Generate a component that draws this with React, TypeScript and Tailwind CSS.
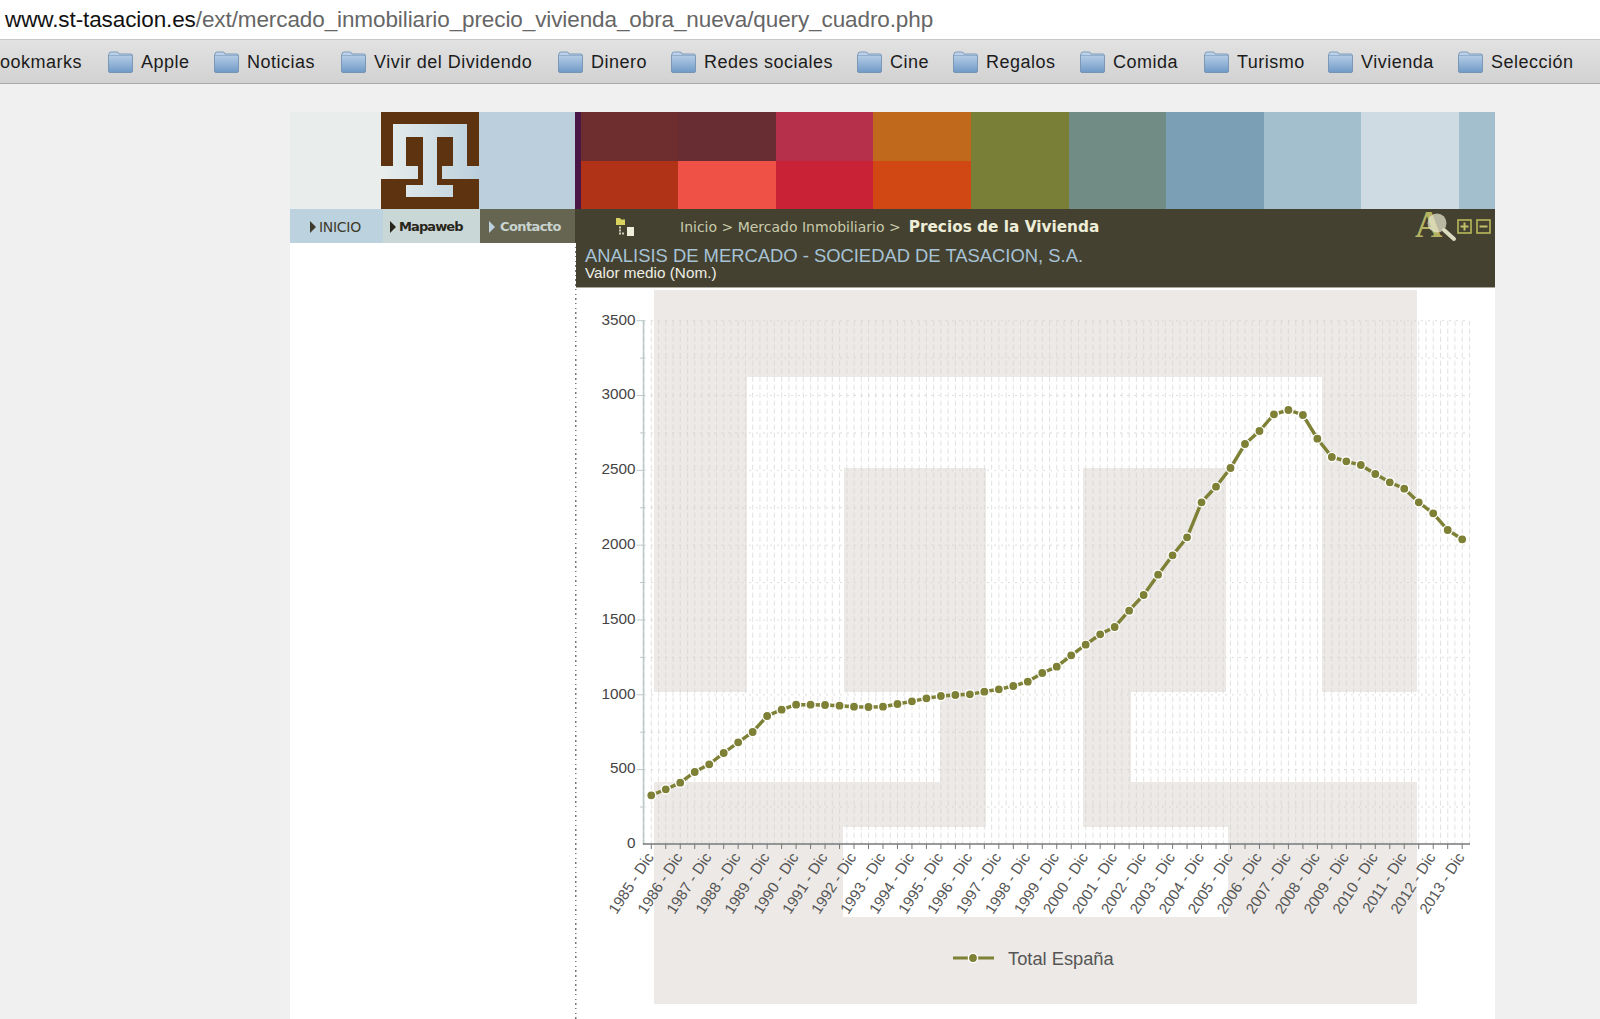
const ys = [795.3,789.3,782.7,772,764.3,753,742.3,732,716,709.7,704.7,704.7,705,705.7,706.7,707,706.7,704,
701.3,698.3,696,695,694.3,691.7,689.3,686,681.7,673,666.7,655.3,644.7,634.3,627,610.7,595,574.7,
555.3,537.3,502.3,486.7,468,444,431,414.3,410,415,438.7,457,461.3,465,474,482.3,488.7,502.3,513.3,530,539.3];
const px = (i: number) => 651.3 + i * 14.48;
const points = ys.map((y, i) => `${px(i).toFixed(1)},${y}`).join(" ");
const gridX = Array.from({ length: 115 }, (_, i) => 644.1 + i * 7.24);
const gridY = Array.from({ length: 14 }, (_, i) => 320.7 + i * 37.41);
const yLabels = [3500, 3000, 2500, 2000, 1500, 1000, 500, 0];
const years = Array.from({ length: 29 }, (_, i) => 1985 + i);

const bookmarks = [
  { t: "ookmarks", w: "w-[108px]", folder: false },
  { t: "Apple", w: "w-[106px]", folder: true },
  { t: "Noticias", w: "w-[127px]", folder: true },
  { t: "Vivir del Dividendo", w: "w-[217px]", folder: true },
  { t: "Dinero", w: "w-[113px]", folder: true },
  { t: "Redes sociales", w: "w-[186px]", folder: true },
  { t: "Cine", w: "w-[96px]", folder: true },
  { t: "Regalos", w: "w-[127px]", folder: true },
  { t: "Comida", w: "w-[124px]", folder: true },
  { t: "Turismo", w: "w-[124px]", folder: true },
  { t: "Vivienda", w: "w-[130px]", folder: true },
  { t: "Selección", w: "w-[142px]", folder: true },
];

function Folder() {
  return (
    <svg width="25" height="22" viewBox="0 0 25 22" className="shrink-0 mr-[8px]">
      <defs>
        <linearGradient id="fg" x1="0" y1="0" x2="0" y2="1">
          <stop offset="0" stopColor="#c3d7ec" />
          <stop offset="1" stopColor="#6f9ac6" />
        </linearGradient>
      </defs>
      <path d="M1 3 Q1 1 3 1 H9 Q10.5 1 11 3 H23 Q24.5 3 24.5 5 V20 Q24.5 21.5 23 21.5 H2 Q0.5 21.5 0.5 20 V4 Z" fill="url(#fg)" stroke="#6b8cad" strokeWidth="0.8" />
      <path d="M1 4.5 H24" stroke="#8aa7c6" strokeWidth="0.8" />
    </svg>
  );
}

function Logo() {
  return (
    <svg width="98" height="97" viewBox="0 0 98 97" className="shrink-0 block">
      <defs>
        <linearGradient id="lg" x1="0" y1="0" x2="1" y2="0">
          <stop offset="0" stopColor="#e9eeed" />
          <stop offset="1" stopColor="#bbd0dc" />
        </linearGradient>
      </defs>
      <rect width="98" height="97" fill="#5e3310" />
      <path d="M12 12H86V54H98V67H61V54H72V25H56V73H72V85H25V73H42V25H25V54H37V67H0V54H12Z" fill="url(#lg)" />
    </svg>
  );
}

function Tri({ c }: { c: string }) {
  return (
    <svg width="6" height="12" viewBox="0 0 6 12" className="shrink-0 mr-[3px]">
      <polygon points="0,0 6,6 0,12" fill={c} />
    </svg>
  );
}

function TreeIcon() {
  return (
    <svg width="20" height="20" viewBox="0 0 20 20" className="shrink-0">
      <path d="M0 2H4L5 3.5H9V9H0Z" fill="#d9d160" />
      <rect x="3" y="10.5" width="2" height="2" fill="#cfcfb8" />
      <rect x="3" y="13.5" width="2" height="2" fill="#cfcfb8" />
      <rect x="6" y="16.5" width="2" height="2" fill="#cfcfb8" />
      <rect x="3" y="16.5" width="2" height="2" fill="#cfcfb8" />
      <rect x="11" y="11" width="7" height="9" fill="#efeeda" />
    </svg>
  );
}

function ZoomIcon() {
  return (
    <svg width="46" height="44" viewBox="0 -6 46 44" className="shrink-0 mr-[-7px]">
      <text x="1" y="27" fontFamily="'Liberation Serif', serif" fontWeight="700" fontSize="38" fill="#b3b362">A</text>
      <circle cx="23" cy="13" r="9.5" fill="#e6e6d0" opacity="0.72" />
      <path d="M30 20 L40 29" stroke="#dcdcc0" strokeWidth="4" strokeLinecap="round" />
    </svg>
  );
}

function Box({ minus }: { minus?: boolean }) {
  return (
    <svg width="15" height="15" viewBox="0 0 15 15" className="shrink-0">
      <rect x="1" y="1" width="13" height="13" fill="none" stroke="#b9b75a" strokeWidth="1.6" />
      <path d="M3.5 7.5H11.5" stroke="#c2c068" strokeWidth="2" />
      {!minus && <path d="M7.5 3.5V11.5" stroke="#c2c068" strokeWidth="2" />}
    </svg>
  );
}

export default function App() {
  return (
    <div className="w-[1600px] h-[1019px] overflow-hidden bg-[#f0f0f0] font-['Liberation_Sans',sans-serif]">
      <div className="h-[40px] bg-white border-b border-[#c8c8c8] pl-[5px] pt-[1px] flex items-center text-[22.5px] leading-none text-[#666] tracking-[-0.1px]">
        <span className="text-[#111]">www.st-tasacion.es</span>
        <span>/ext/mercado_inmobiliario_precio_vivienda_obra_nueva/query_cuadro.php</span>
      </div>
      <div className="h-[44px] flex items-center bg-gradient-to-b from-[#e2e2e2] to-[#d2d2d2] border-b border-[#aaaaaa] text-[18px] text-[#1c1c1c] tracking-[0.5px] whitespace-nowrap overflow-hidden">
        {bookmarks.map((b) => (
          <div key={b.t} className={`${b.w} shrink-0 flex items-center`}>
            {b.folder && <Folder />}
            <span className="pt-[2px]">{b.t}</span>
          </div>
        ))}
      </div>
      <div className="pt-[28px] pl-[290px]">
        <div className="w-[1205px] flex h-[97px]">
          <div className="w-[91px] bg-[#e9eeed]" />
          <Logo />
          <div className="w-[96px] bg-[#bbd0dc]" />
          <div className="w-[6px] bg-[#4a1547]" />
          <div className="flex-1 grid grid-cols-[97px_98px_97px_98px_98px_97px_98px_97px_98px_36px] grid-rows-2">
            <div className="bg-[#6e2e30]" />
            <div className="bg-[#672d33]" />
            <div className="bg-[#b6304b]" />
            <div className="bg-[#c0681c]" />
            <div className="row-span-2 bg-[#7a7f38]" />
            <div className="row-span-2 bg-[#708c85]" />
            <div className="row-span-2 bg-[#7b9fb4]" />
            <div className="row-span-2 bg-[#a3bfcd]" />
            <div className="row-span-2 bg-[#cfdbe2]" />
            <div className="row-span-2 bg-[#a3bfce]" />
            <div className="bg-[#b03318]" />
            <div className="bg-[#f05146]" />
            <div className="bg-[#c92136]" />
            <div className="bg-[#d14814]" />
          </div>
        </div>
        <div className="w-[1205px] flex h-[810px]">
          <div className="w-[285px] bg-white">
            <div className="flex h-[34px] font-['DejaVu_Sans',sans-serif] text-[13px] whitespace-nowrap">
              <div className="w-[93px] bg-[#bcd2de] flex items-center pl-[20px] pt-[2px] text-[#3f3b2c] font-medium text-[14px]">
                <Tri c="#3f3b2c" />
                <span className="tracking-[-0.3px]">INICIO</span>
              </div>
              <div className="w-[97px] bg-[#c9d7d6] flex items-center pl-[7px] pt-[2px] text-[#28251b] font-bold">
                <Tri c="#28251b" />
                <span className="tracking-[-0.9px]">Mapaweb</span>
              </div>
              <div className="w-[95px] bg-[#666551] flex items-center pl-[9px] pt-[2px] text-[#c8d3cf] font-bold">
                <Tri c="#bcd2de" />
                <span className="ml-[2px] tracking-[-0.6px]">Contacto</span>
              </div>
            </div>
          </div>
          <div className="w-[920px] bg-white bg-[repeating-linear-gradient(to_bottom,#777_0px,#777_1.5px,transparent_1.5px,transparent_4.7px)] bg-no-repeat bg-[length:1.5px_100%]">
            <div className="h-[34px] bg-[#444131] flex items-center pl-[41px] pr-[4px] whitespace-nowrap">
              <TreeIcon />
              <span className="ml-[44px] pt-[3px] font-['DejaVu_Sans',sans-serif] text-[14px] text-[#c9cbab]">Inicio &gt; Mercado Inmobiliario &gt;</span>
              <span className="ml-[8px] pt-[3px] font-['DejaVu_Sans',sans-serif] font-bold text-[15.3px] text-[#eeeed8]">Precios de la Vivienda</span>
              <div className="ml-auto flex items-center gap-[4px]">
                <ZoomIcon />
                <Box />
                <Box minus />
              </div>
            </div>
            <div className="ml-px h-[45px] bg-[#444131] border-b border-[#a8a89c] pl-[9px] pt-[2px] whitespace-nowrap">
              <div className="text-[18.4px] leading-[21px] text-[#a7c3d6]">ANALISIS DE MERCADO - SOCIEDAD DE TASACION, S.A.</div>
              <div className="text-[15.3px] leading-[14px] text-[#eeeee4]">Valor medio (Nom.)</div>
            </div>
            <svg width="920" height="731" viewBox="575 288 920 731" className="block">
              <rect x="654" y="290" width="763" height="714" fill="#ece9e6" />
              <g fill="#ffffff">
                <rect x="747" y="377" width="575" height="91" />
                <rect x="747" y="377" width="97" height="315" />
                <rect x="654" y="692" width="286" height="90" />
                <rect x="986" y="377" width="97" height="540" />
                <rect x="1226" y="377" width="96" height="315" />
                <rect x="1131" y="692" width="286" height="90" />
                <rect x="843" y="827" width="385" height="90" />
              </g>
              <g stroke="#d3d6d3" strokeWidth="0.7" strokeDasharray="5 3">
                {gridX.map((x) => (
                  <line key={x} x1={x} x2={x} y1="320.7" y2="844" />
                ))}
              </g>
              <g stroke="#d4d4d0" strokeWidth="0.8" strokeDasharray="2 5">
                {gridY.map((y) => (
                  <line key={y} x1="644" x2="1470" y1={y} y2={y} />
                ))}
              </g>
              <line x1="643.5" x2="643.5" y1="320" y2="845" stroke="#bcc9c9" strokeWidth="1.6" />
              {gridY.map((y, i) => (
                <line key={y} x1={i % 2 === 0 ? 636.5 : 640} x2="643" y1={y} y2={y} stroke="#bcc9c9" strokeWidth="1" />
              ))}
              {yLabels.map((v, i) => (
                <text key={v} x="635.5" y={320.7 + i * 74.82 + 3.8} textAnchor="end" fontSize="15.3" fill="#444">{v}</text>
              ))}
              <line x1="643" x2="1470" y1="844" y2="844" stroke="#77787a" strokeWidth="1.6" />
              {ys.map((_, i) => (
                <line key={i} x1={px(i)} x2={px(i)} y1="844" y2="849" stroke="#77787a" strokeWidth="1" />
              ))}
              {years.map((yr, i) => (
                <text key={yr} x={px(i * 2) + 3} y="857" textAnchor="end" fontSize="15.2" fill="#555" transform={`rotate(-57 ${px(i * 2) + 3} 857)`}>{`${yr} - Dic`}</text>
              ))}
              <polyline points={points} fill="none" stroke="#7d8035" strokeWidth="3.4" />
              {ys.map((y, i) => (
                <circle key={i} cx={px(i)} cy={y} r="4.6" fill="#7d8035" stroke="#ffffff" strokeWidth="1.4" />
              ))}
              <line x1="953" x2="994" y1="958" y2="958" stroke="#7d8035" strokeWidth="3" />
              <circle cx="973" cy="958" r="4.6" fill="#7d8035" stroke="#ffffff" strokeWidth="1.4" />
              <text x="1008" y="965" fontSize="18.3" fill="#555">Total España</text>
            </svg>
          </div>
        </div>
      </div>
    </div>
  );
}
